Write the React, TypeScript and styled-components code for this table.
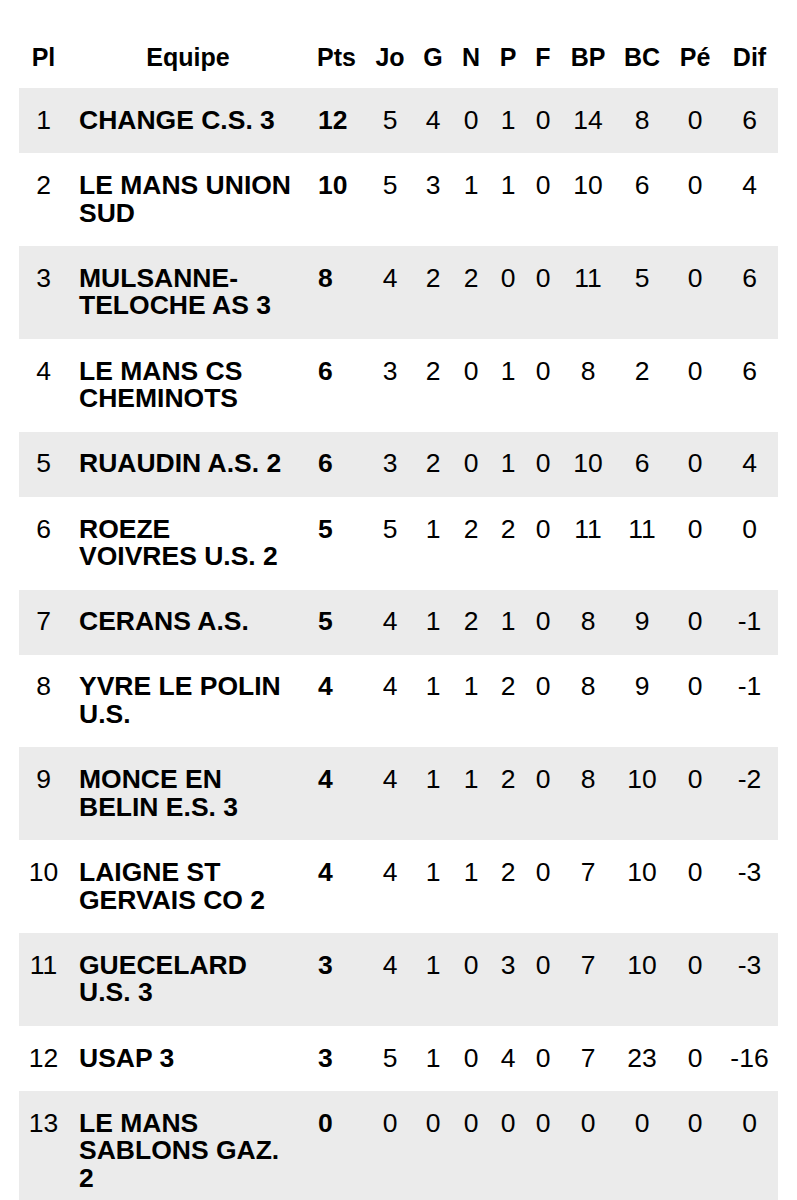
import styled, { createGlobalStyle } from "styled-components";

const GlobalStyle = createGlobalStyle`
  body {
    margin: 0;
    background: #fff;
    color: #000;
    font-family: "Liberation Sans", Arial, Helvetica, sans-serif;
  }
`;

const Table = styled.table`
  width: 759px;
  margin: 26px 0 0 19px;
  border-collapse: collapse;
  table-layout: fixed;
`;

const HeadCell = styled.th`
  padding: 17px 0;
  font-size: 25px;
  line-height: 28px;
  font-weight: 700;
  text-align: center;
`;

const Row = styled.tr<{ $shaded: boolean }>`
  background: ${(p) => (p.$shaded ? "#ebebeb" : "#fff")};
`;

const Cell = styled.td`
  padding: 18.8px 0;
  font-size: 26.5px;
  line-height: 27.6px;
  font-weight: 400;
  text-align: center;
  vertical-align: top;
`;

const NameCell = styled(Cell)`
  padding-left: 11px;
  padding-right: 15px;
  font-weight: 700;
  text-align: left;
`;

const PointsCell = styled(Cell)`
  padding-left: 10px;
  font-weight: 700;
  text-align: left;
`;

const columns = [
  { label: "Pl", width: 49 },
  { label: "Equipe", width: 240 },
  { label: "Pts", width: 57 },
  { label: "Jo", width: 50 },
  { label: "G", width: 36 },
  { label: "N", width: 40 },
  { label: "P", width: 34 },
  { label: "F", width: 36 },
  { label: "BP", width: 54 },
  { label: "BC", width: 54 },
  { label: "Pé", width: 52 },
  { label: "Dif", width: 57 },
];

type Team = [string, number, number, number, number, number, number, number, number, number, number];

const teams: Team[] = [
  ["CHANGE C.S. 3", 12, 5, 4, 0, 1, 0, 14, 8, 0, 6],
  ["LE MANS UNION SUD", 10, 5, 3, 1, 1, 0, 10, 6, 0, 4],
  ["MULSANNE-TELOCHE AS 3", 8, 4, 2, 2, 0, 0, 11, 5, 0, 6],
  ["LE MANS CS CHEMINOTS", 6, 3, 2, 0, 1, 0, 8, 2, 0, 6],
  ["RUAUDIN A.S. 2", 6, 3, 2, 0, 1, 0, 10, 6, 0, 4],
  ["ROEZE VOIVRES U.S. 2", 5, 5, 1, 2, 2, 0, 11, 11, 0, 0],
  ["CERANS A.S.", 5, 4, 1, 2, 1, 0, 8, 9, 0, -1],
  ["YVRE LE POLIN U.S.", 4, 4, 1, 1, 2, 0, 8, 9, 0, -1],
  ["MONCE EN BELIN E.S. 3", 4, 4, 1, 1, 2, 0, 8, 10, 0, -2],
  ["LAIGNE ST GERVAIS CO 2", 4, 4, 1, 1, 2, 0, 7, 10, 0, -3],
  ["GUECELARD U.S. 3", 3, 4, 1, 0, 3, 0, 7, 10, 0, -3],
  ["USAP 3", 3, 5, 1, 0, 4, 0, 7, 23, 0, -16],
  ["LE MANS SABLONS GAZ. 2", 0, 0, 0, 0, 0, 0, 0, 0, 0, 0],
];

function App() {
  return (
    <>
      <GlobalStyle />
      <Table>
        <colgroup>
          {columns.map((c) => (
            <col key={c.label} style={{ width: c.width }} />
          ))}
        </colgroup>
        <thead>
          <tr>
            {columns.map((c) => (
              <HeadCell key={c.label}>{c.label}</HeadCell>
            ))}
          </tr>
        </thead>
        <tbody>
          {teams.map(([name, pts, ...stats], i) => (
            <Row key={name} $shaded={i % 2 === 0}>
              <Cell>{i + 1}</Cell>
              <NameCell>{name}</NameCell>
              <PointsCell>{pts}</PointsCell>
              {stats.map((s, j) => (
                <Cell key={j}>{s}</Cell>
              ))}
            </Row>
          ))}
        </tbody>
      </Table>
    </>
  );
}

export default App;
